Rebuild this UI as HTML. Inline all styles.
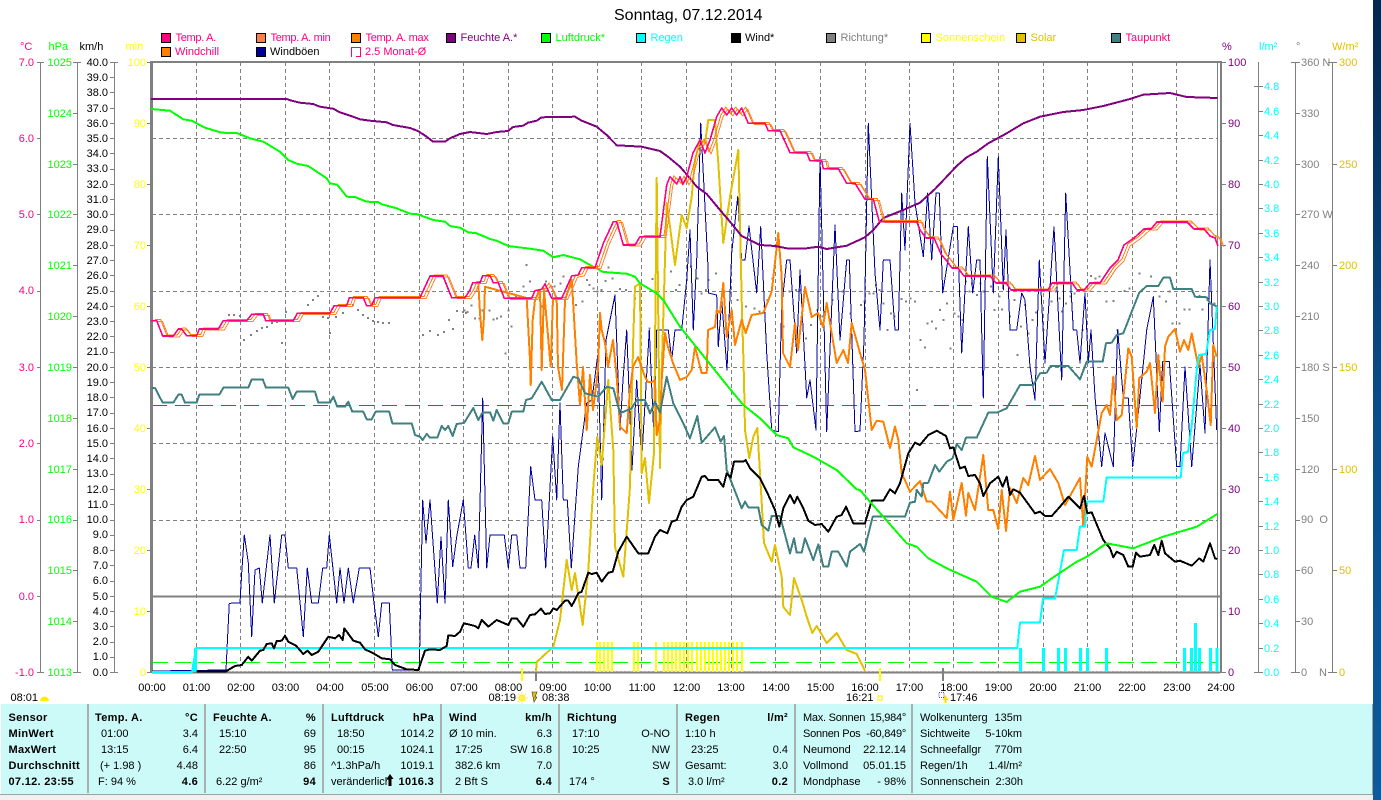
<!DOCTYPE html>
<html><head><meta charset="utf-8"><title>Sonntag, 07.12.2014</title>
<style>
html,body{margin:0;padding:0;background:#fff;width:1381px;height:800px;overflow:hidden}
svg{position:absolute;left:0;top:0;display:block}
text{font-family:"Liberation Sans",sans-serif;font-size:11px}
.s{fill:none;stroke-linejoin:round;shape-rendering:crispEdges}
.b{font-weight:bold;letter-spacing:.3px}
.e{text-anchor:end}
.n{letter-spacing:-.25px}
.p{fill:#ff0080}.g{fill:#00ff00}.y{fill:#ffff00}.c{fill:#00ffff}.v{fill:#800080}.a{fill:#808080}.o{fill:#e0c000}
</style></head><body>
<svg width="1381" height="800" viewBox="0 0 1381 800">
<defs>
<linearGradient id="desk" x1="0" y1="0" x2="0" y2="1"><stop offset="0" stop-color="#04264f"/><stop offset=".5" stop-color="#0a4c88"/><stop offset="1" stop-color="#0d5a9c"/></linearGradient>
<polyline id="temp" class="s" points="151,320.7 156.7,320.7 162.7,336 173.3,336 178.3,329 181.7,329 186.7,335.7 196.7,335.7 199.3,329 218.3,329 223.3,320.7 246.7,320.7 251.7,314.3 263.3,314.3 265.7,320.7 293.3,320.7 297.3,313.3 330,313.3 334,305.7 346.7,305.7 349.3,297.7 363.3,297.7 366.7,305.7 371.7,305.7 375,297.7 420,297.7 430,276 443,276 451.7,297.7 465,297.7 470,290 472.7,282.7 480,282.7 482.7,275.7 490,275.7 493.3,282.7 498.3,282.7 504.3,298.3 531.7,298.3 535,290.7 541.7,289.3 545,284 548.3,290.7 551.7,298.3 561.7,298.3 571.7,276 578.3,275 581.7,267.7 595,267.7 603.3,243.3 613.3,221.7 616.7,221.7 623.3,245 635,245 640,236.7 660,236.7 666.7,185 670,176.7 676.7,184 680,177 683,184 686.7,176.7 693,153 700,140 705,153 710,140 716.7,116.7 721.7,108 726.7,115 731.7,108 736.7,115 741.7,108 748.3,123.3 765,123.3 768.3,130.7 780,130.7 790,152.7 806.7,152.7 810,160.7 821.7,160.7 823.3,168.7 838.3,168.7 846.7,183.3 855,183.3 865,199.3 873.3,199.3 879.3,221.7 916.7,221.7 920,230 926,238 934,238 941,254 946,260 952,268 958,268 964,276 990,276 996,283 1006,283 1011,290 1048,290 1052,283 1072,283 1077,290 1084,290 1090,283 1100,283 1110,268 1118,260 1124,245 1134,238 1144,229 1151,229 1157,222 1187,222 1194,229 1204,229 1210,236 1215,238 1218,246"/>
</defs>

<!-- title -->
<text x="614" y="20" style="font-size:16px">Sonntag, 07.12.2014</text>

<!-- legend -->
<g stroke="#000" stroke-width="1" shape-rendering="crispEdges">
<rect x="161.5" y="33.5" width="9" height="9" fill="#ff0080"/>
<rect x="256.5" y="33.5" width="9" height="9" fill="#ff8040"/>
<rect x="351.5" y="33.5" width="9" height="9" fill="#ff8000"/>
<rect x="446.5" y="33.5" width="9" height="9" fill="#800080"/>
<rect x="541.5" y="33.5" width="9" height="9" fill="#00ff00"/>
<rect x="636.5" y="33.5" width="9" height="9" fill="#00ffff"/>
<rect x="731.5" y="33.5" width="9" height="9" fill="#000"/>
<rect x="826.5" y="33.5" width="9" height="9" fill="#808080"/>
<rect x="921.5" y="33.5" width="9" height="9" fill="#ffff00"/>
<rect x="1016.5" y="33.5" width="9" height="9" fill="#e0c000"/>
<rect x="1111.5" y="33.5" width="9" height="9" fill="#408080"/>
<rect x="161.5" y="47.5" width="9" height="9" fill="#ff8000"/>
<rect x="256.5" y="47.5" width="9" height="9" fill="#000099"/>
</g>
<path d="M351.5 57V47.5H360.5V56.5H356" fill="none" stroke="#ff0080" shape-rendering="crispEdges"/>
<g transform="translate(0,-1)">
<text x="175.5" y="42" class="p" style="letter-spacing:-.3px">Temp. A.</text>
<text x="270.5" y="42" class="p" style="letter-spacing:-.3px">Temp. A. min</text>
<text x="365.5" y="42" class="p" style="letter-spacing:-.3px">Temp. A. max</text>
<text x="460.5" y="42" class="v">Feuchte A.*</text>
<text x="555.5" y="42" class="g">Luftdruck*</text>
<text x="650.5" y="42" class="c">Regen</text>
<text x="745" y="42">Wind*</text>
<text x="840.5" y="42" class="a">Richtung*</text>
<text x="935.5" y="42" class="y">Sonnenschein</text>
<text x="1030.5" y="42" class="o">Solar</text>
<text x="1125.5" y="42" class="p">Taupunkt</text>
<text x="175" y="56" class="p">Windchill</text>
<text x="270" y="56">Windböen</text>
<text x="365" y="56" class="p">2.5 Monat-Ø</text>

<!-- axis headers -->
<text x="20" y="51" class="p">°C</text>
<text x="48.5" y="51" class="g">hPa</text>
<text x="79.5" y="51">km/h</text>
<text x="125.5" y="51" class="y">min</text>
<text x="1222" y="51" class="v">%</text>
<text x="1259" y="51" class="c">l/m²</text>
<text x="1296" y="51" class="a">°</text>
<text x="1332" y="51" class="o">W/m²</text>
</g>

<!-- axis lines and ticks -->
<path stroke="#808080" fill="none" shape-rendering="crispEdges" d="M40.5 62V672M77.5 62V672M114.5 62V672M1258.5 62V672M1295.5 62V672M1332.5 62V672
M37 62.5H44M37 138.5H41M37 214.5H41M37 291.5H41M37 367.5H41M37 443.5H41M37 520.5H41M37 596.5H41M37 672.5H44
M73 62.5H81M73 113.5H78M73 164.5H78M73 214.5H78M73 265.5H78M73 316.5H78M73 367.5H78M73 418.5H78M73 469.5H78M73 520.5H78M73 570.5H78M73 621.5H78M73 672.5H81
M110 62.5H118M110 77.5H115M110 92.5H115M110 108.5H115M110 123.5H115M110 138.5H115M110 153.5H115M110 169.5H115M110 184.5H115M110 199.5H115M110 214.5H115M110 230.5H115M110 245.5H115M110 260.5H115M110 275.5H115M110 291.5H115M110 306.5H115M110 321.5H115M110 336.5H115M110 352.5H115M110 367.5H115M110 382.5H115M110 397.5H115M110 413.5H115M110 428.5H115M110 443.5H115M110 458.5H115M110 474.5H115M110 489.5H115M110 504.5H115M110 520.5H115M110 535.5H115M110 550.5H115M110 565.5H115M110 581.5H115M110 596.5H115M110 611.5H115M110 626.5H115M110 642.5H115M110 657.5H115M110 672.5H118
M147 62.5H151M147 123.5H151M147 184.5H151M147 245.5H151M147 306.5H151M147 367.5H151M147 428.5H151M147 489.5H151M147 550.5H151M147 611.5H151M147 672.5H151
M1221 62.5H1226M1221 123.5H1226M1221 184.5H1226M1221 245.5H1226M1221 306.5H1226M1221 367.5H1226M1221 428.5H1226M1221 489.5H1226M1221 550.5H1226M1221 611.5H1226M1221 672.5H1226
M1254 86.5H1263M1259 111.5H1263M1259 135.5H1263M1259 160.5H1263M1259 184.5H1263M1259 208.5H1263M1259 233.5H1263M1259 257.5H1263M1259 282.5H1263M1259 306.5H1263M1259 330.5H1263M1259 355.5H1263M1259 379.5H1263M1259 404.5H1263M1259 428.5H1263M1259 452.5H1263M1259 477.5H1263M1259 501.5H1263M1259 526.5H1263M1259 550.5H1263M1259 574.5H1263M1259 599.5H1263M1259 623.5H1263M1259 648.5H1263M1254 672.5H1263
M1291 62.5H1300M1296 113.5H1300M1296 164.5H1300M1296 214.5H1300M1296 265.5H1300M1296 316.5H1300M1296 367.5H1300M1296 418.5H1300M1296 469.5H1300M1296 520.5H1300M1296 570.5H1300M1296 621.5H1300M1291 672.5H1300
M1328 62.5H1337M1333 164.5H1337M1333 265.5H1337M1333 367.5H1337M1333 469.5H1337M1333 570.5H1337M1328 672.5H1337"/>

<g transform="translate(0,-1)">
<!-- °C labels -->
<g class="p" text-anchor="end">
<text x="34" y="67">7.0</text><text x="34" y="143">6.0</text><text x="34" y="219">5.0</text><text x="34" y="295">4.0</text><text x="34" y="372">3.0</text><text x="34" y="448">2.0</text><text x="34" y="524">1.0</text><text x="34" y="601">0.0</text><text x="34" y="677">-1.0</text>
</g>
<g class="g" text-anchor="end">
<text x="72" y="67">1025</text><text x="72" y="118">1024</text><text x="72" y="169">1023</text><text x="72" y="219">1022</text><text x="72" y="270">1021</text><text x="72" y="321">1020</text><text x="72" y="372">1019</text><text x="72" y="423">1018</text><text x="72" y="474">1017</text><text x="72" y="524">1016</text><text x="72" y="575">1015</text><text x="72" y="626">1014</text><text x="72" y="677">1013</text>
</g>
<g text-anchor="end">
<text x="108" y="67">40.0</text><text x="108" y="82">39.0</text><text x="108" y="97">38.0</text><text x="108" y="113">37.0</text><text x="108" y="128">36.0</text><text x="108" y="143">35.0</text><text x="108" y="158">34.0</text><text x="108" y="173">33.0</text><text x="108" y="189">32.0</text><text x="108" y="204">31.0</text><text x="108" y="219">30.0</text><text x="108" y="234">29.0</text><text x="108" y="250">28.0</text><text x="108" y="265">27.0</text><text x="108" y="280">26.0</text><text x="108" y="295">25.0</text><text x="108" y="311">24.0</text><text x="108" y="326">23.0</text><text x="108" y="341">22.0</text><text x="108" y="356">21.0</text><text x="108" y="372">20.0</text><text x="108" y="387">19.0</text><text x="108" y="402">18.0</text><text x="108" y="417">17.0</text><text x="108" y="433">16.0</text><text x="108" y="448">15.0</text><text x="108" y="463">14.0</text><text x="108" y="478">13.0</text><text x="108" y="494">12.0</text><text x="108" y="509">11.0</text><text x="108" y="524">10.0</text><text x="108" y="539">9.0</text><text x="108" y="555">8.0</text><text x="108" y="570">7.0</text><text x="108" y="585">6.0</text><text x="108" y="601">5.0</text><text x="108" y="616">4.0</text><text x="108" y="631">3.0</text><text x="108" y="646">2.0</text><text x="108" y="661">1.0</text><text x="108" y="677">0.0</text>
</g>
<g class="y" text-anchor="end">
<text x="146" y="67">100</text><text x="146" y="128">90</text><text x="146" y="189">80</text><text x="146" y="250">70</text><text x="146" y="311">60</text><text x="146" y="372">50</text><text x="146" y="433">40</text><text x="146" y="494">30</text><text x="146" y="555">20</text><text x="146" y="616">10</text><text x="146" y="677">0</text>
</g>
<g class="v">
<text x="1228" y="67">100</text><text x="1228" y="128">90</text><text x="1228" y="189">80</text><text x="1228" y="250">70</text><text x="1228" y="311">60</text><text x="1228" y="372">50</text><text x="1228" y="433">40</text><text x="1228" y="494">30</text><text x="1228" y="555">20</text><text x="1228" y="616">10</text><text x="1228" y="677">0</text>
</g>
<g class="c">
<text x="1264" y="91">4.8</text><text x="1264" y="116">4.6</text><text x="1264" y="140">4.4</text><text x="1264" y="165">4.2</text><text x="1264" y="189">4.0</text><text x="1264" y="213">3.8</text><text x="1264" y="238">3.6</text><text x="1264" y="262">3.4</text><text x="1264" y="287">3.2</text><text x="1264" y="311">3.0</text><text x="1264" y="335">2.8</text><text x="1264" y="360">2.6</text><text x="1264" y="384">2.4</text><text x="1264" y="409">2.2</text><text x="1264" y="433">2.0</text><text x="1264" y="457">1.8</text><text x="1264" y="482">1.6</text><text x="1264" y="506">1.4</text><text x="1264" y="531">1.2</text><text x="1264" y="555">1.0</text><text x="1264" y="579">0.8</text><text x="1264" y="604">0.6</text><text x="1264" y="628">0.4</text><text x="1264" y="653">0.2</text><text x="1264" y="677">0.0</text>
</g>
<g class="a">
<text x="1301" y="67">360 N</text><text x="1301" y="118">330</text><text x="1301" y="169">300</text><text x="1301" y="219">270 W</text><text x="1301" y="270">240</text><text x="1301" y="321">210</text><text x="1301" y="372">180 S</text><text x="1301" y="423">150</text><text x="1301" y="474">120</text><text x="1301" y="524">90&#160;&#160;O</text><text x="1301" y="575">60</text><text x="1301" y="626">30</text><text x="1301" y="677">0</text><text x="1319" y="677">N</text>
</g>
<g class="o">
<text x="1339" y="67">300</text><text x="1339" y="169">250</text><text x="1339" y="270">200</text><text x="1339" y="372">150</text><text x="1339" y="474">100</text><text x="1339" y="575">50</text><text x="1339" y="677">0</text>
</g>
</g>

<!-- grid -->
<path stroke="#808080" stroke-dasharray="4 3" fill="none" shape-rendering="crispEdges" d="M196.5 62V672M240.5 62V672M285.5 62V672M329.5 62V672M374.5 62V672M419.5 62V672M463.5 62V672M508.5 62V672M552.5 62V672M597.5 62V672M641.5 62V672M686.5 62V672M731.5 62V672M775.5 62V672M820.5 62V672M865.5 62V672M909.5 62V672M953.5 62V672M998.5 62V672M1043.5 62V672M1087.5 62V672M1132.5 62V672M1176.5 62V672
M152 138.5H1218M152 214.5H1218M152 291.5H1218M152 367.5H1218M152 443.5H1218M152 520.5H1218"/>
<rect x="152" y="595.5" width="1068" height="2" fill="#808080"/>
<path d="M152 405.5H1218" stroke="#e8107c" stroke-dasharray="15 8" shape-rendering="crispEdges"/>
<path d="M152 662.5H1218" stroke="#00ff00" stroke-dasharray="16 7" shape-rendering="crispEdges"/>
<rect x="150" y="61" width="1071" height="2" fill="#808080"/>
<rect x="150" y="61" width="3" height="612" fill="#808080"/>
<rect x="1217" y="62" width="1" height="610" fill="#808080"/>
<rect x="1220" y="61" width="2" height="612" fill="#808080"/>
<rect x="152" y="671.5" width="1068" height="2" fill="#808080"/>
<path d="M152 671.5H1218" stroke="#e0a040" stroke-dasharray="2 2" shape-rendering="crispEdges"/>

<!-- direction dots -->
<path fill="none" stroke="#808080" stroke-width="2" shape-rendering="crispEdges" d="M228 315h2M233 315h2M239 316h2M243 340h2M250 335h2M256 331h2M261 328h2M266 327h2M271 323h2M276 322h2M281 343h2M285 312h2M307 305h2M312 300h2M317 296h2M322 317h2M327 318h2M329 333h2M335 317h2M342 313h2M352 305h2M357 310h2M362 315h2M367 318h2M372 321h2M377 322h2M382 323h2M388 323h2M422 335h2M429 331h2M437 335h2M443 332h2M452 329h2M448 320h2M456 311h2M462 312h2M465 313h2M916 390h2"/>
<g transform="translate(460,100) scale(.33333)"><path fill="none" stroke="#808080" stroke-width="6" shape-rendering="crispEdges" d="M10 632h6M20 636h6M32 617h6M42 655h6M55 655h6M65 632h6M85 632h6M98 658h6M108 655h6M120 650h6M133 760h6M143 632h6M152 680h6M165 590h6M180 590h6M188 560h6M197 495h6M207 545h6M255 545h6M242 620h6M280 560h6M298 550h6M308 530h6M345 615h6M365 605h6M378 540h6M385 555h6M398 565h6M410 575h6M422 570h6M433 543h6M443 503h6M455 535h6M477 567h6M495 570h6M522 595h6M540 683h6M565 685h6M575 537h6M595 590h6M610 530h6M630 515h6M645 570h6M655 555h6M678 540h6M690 500h6M710 535h6M722 580h6M735 570h6M743 540h6M765 520h6M790 575h6M810 577h6M830 600h6M855 620h6M880 625h6M895 635h6M910 620h6M920 600h6M935 535h6M968 680h6M985 575h6M1005 570h6M1015 570h6M1035 715h6M1050 675h6M1070 630h6M1085 650h6M1115 600h6M1145 575h6M1168 640h6"/></g>
<g transform="translate(860,100) scale(.33333)"><path fill="none" stroke="#808080" stroke-width="6" shape-rendering="crispEdges" d="M0 615h6M10 605h6M25 580h6M37 580h6M45 555h6M55 570h6M68 610h6M80 690h6M90 640h6M100 650h6M122 597h6M135 605h6M148 595h6M162 605h6M178 720h6M192 743h6M200 670h6M213 665h6M225 685h6M237 630h6M247 660h6M258 610h6M268 745h6M280 640h6M292 650h6M305 660h6M315 545h6M325 575h6M333 550h6M348 585h6M358 550h6M368 575h6M390 560h6M400 630h6M415 590h6M423 628h6M447 650h6M460 600h6M470 765h6M480 680h6M492 615h6M503 700h6M515 660h6M525 638h6M548 690h6M572 605h6M585 575h6M595 595h6M603 635h6M615 610h6M628 590h6M640 580h6M665 690h6M690 528h6M703 535h6M715 530h6M737 605h6M757 603h6M770 690h6M790 573h6M805 565h6M835 520h6M870 530h6M895 590h6M915 605h6M925 575h6M935 670h6M955 670h6M970 628h6M985 628h6M1015 588h6M1025 628h6M1040 600h6M1060 610h6"/></g>

<!-- sunshine bars -->
<path stroke="#ffff00" stroke-width="2" fill="none" shape-rendering="crispEdges" d="M597 642V672M600 642V672M604 642V672M608 642V672M612 642V672M634 642V672M638 642V672M656 642V672M664 642V672M668 642V672M672 642V672M676 642V672M680 642V672M684 642V672M688 642V672M692 642V672M697 642V672M701 642V672M705 642V672M709 642V672M713 642V672M717 642V672M721 642V672M725 642V672M729 642V672M733 642V672M737 642V672M742 642V672"/>
<path stroke="#ffff00" stroke-width="2" d="M522 668V681M880 668V681" shape-rendering="crispEdges"/>
<path stroke="#808080" stroke-width="2" d="M536 668V681M943 668V681" shape-rendering="crispEdges"/>

<!-- wind gusts -->
<polyline class="s" stroke="#0000a0" stroke-width="1" points="152,671 226,670 228,629 229.3,603.3 240,603 241.7,573 244.3,535 248.3,563 251.7,636.7 255,570 259.3,568 262.3,603 270,535 274.3,603 281.7,535 285,535 288.3,568 296.7,568 303.3,636.7 307.3,568 311.7,603 318.3,603 322.7,568 326.7,568 329.3,535 336.7,603 340,568 344,603 348.3,568 353.3,603 359.3,568 370,568 374,603 378.3,636.7 381.7,603 389.3,603 392.3,670 419.3,670 421,580 422.7,500 426,543 430,500 437.3,603 441,536.7 445,603 448.3,500 452.7,566.7 456.7,536.7 463.3,500 468.3,568 471,568 474.7,535 478.3,568 482.7,398 486.7,568 490,535 504.3,535 508.3,568 511.7,535 516.7,535 520,568 525.7,568 530.7,466.7 535,500 541.7,500 545.7,568 552.7,436.7 556.7,500 560,403 563.3,500 567.3,500 571.3,568 578.3,466.7 586.7,403 592,400 598,353 601.7,500 606,340 615,295 620,430 623,380 626.7,330 632,470 636.7,380 641.7,460 649.3,330 654,440 656.7,330 668.3,330 671.7,360 675,330 681.7,330 686.7,280 690,230 693.3,330 696.7,260 700.7,123 705,206.7 708,266.7 708.3,293 716.7,295 718.3,346.7 721.7,300 727,370 731.7,253 737.7,196.7 741.7,260 745,260 749,226 756.7,293 760.7,226.7 766.7,353 771.7,430 778.3,431.7 781.7,306.7 786.7,260 790,260 796.7,353 800,270 806.7,398 810,380 816,430 820,156.7 826.7,431.7 835,225 840,340 846.7,260 849.3,260 855,431.7 860,431 864,340 868.3,123.3 875,273 880,330 883.3,260 890,260 895,330 898.3,330 901.7,193 905,250 910,123.3 915,203 923.3,256.7 927.7,193 931.7,260 936,193 939.3,193 942.7,293 953.3,226.7 957.3,226.7 961.7,353 968.3,226.7 972.7,293 976.7,260 980,260 983.3,398 987.3,156.7 993.3,293 998.3,156.7 1003.3,290 1006,230 1010,330 1016.7,330 1021.7,293 1025,300 1030,366.7 1035,400 1039.3,260 1045,363 1054,226.7 1061.7,380 1065.7,193 1073.3,330 1076.7,330 1080,363 1085,293 1088.3,363 1091,330 1095,396.7 1101.7,466.7 1105,433 1113.3,466.7 1117.7,330 1123.3,398 1128.3,398 1132.7,466.7 1140,396.7 1146.7,330 1153.3,296.7 1159.3,431.7 1162.7,361.7 1169.3,361.7 1176.7,466.7 1180,466.7 1185,366.7 1191.7,466.7 1200,365 1205,433 1210,260 1216.7,430"/>

<!-- solar -->
<polyline class="s" stroke="#e0c000" stroke-width="2" points="536,672 536.7,662 553.3,646.7 560,620 566.7,560 571.7,590 575,573 582.7,625 588.3,570 593.3,486.7 597.3,436.7 601.7,465 608.3,380 613.3,450 615,546.7 623.3,576.7 630,486.7 631.7,403 633.3,336.7 635,286.7 640,283.3 641.7,473 645,458 649,503 654,453 656.7,178 659,380 660,468 661.7,370 666.7,203 670,226.7 675,265 681.7,215 686.7,228 691.7,196.7 695,160 700,140 705,143 708.3,120 715,120 718.3,163 723.3,243 730,196.7 738.3,150 741.7,300 744,380 745,430 749.3,458 753.3,436.7 757.3,428 760,473 764,543 771.7,561.7 775,545 781.7,576.7 783.3,607 790,615 794,578 801.7,600 806.7,616.7 812.3,633 816.7,626 826.7,643 836.7,633 846.7,650 856.7,654 865,671"/>

<!-- wind chill -->
<polyline class="s" stroke="#ff8000" stroke-width="2" points="478.3,283 480,313 482.3,340 484,316.7 485,286.7 526.7,298 530,360 530.7,385 532.7,320 535,300 540,290 541.7,370 544,290 550.7,366.7 553,298 556.7,300 558,366.7 562,390 565,300 571.7,280 573,300 576.7,363 580,405 583,367 586.7,430 590,375 593,410 598,370 600,313 601.7,330 605,343 608,367 613,340 616.7,377 620,426.7 626.7,433 630,390 633,367 638,357 645,377 648,382 652,382 655,380 656.7,435 660,420 661.7,380 665,333 668,347 673,363 680,380 686.7,377 691.7,370 695,347 701.7,373 706.7,373 708,330 715,327 716.7,310 720,313 723.3,283 726.7,337 731.7,310 735,345 741.7,320 745.7,333 751.7,315 763.3,313 771.7,291.7 778.3,233 781.7,277 783,353 790,367 795,323 798,350 805,287 811.7,317 818,313 823,327 826.7,303 836.7,363 843.3,350 848,363 851.7,323 860,353 865,370 871.7,430 876.7,420.7 883.3,421.7 890,448 895,426.7 898.3,440 901.7,473 910,491.7 920,481 926.7,501.7 931.7,501.7 946.7,518 950,491.7 953.3,520 961.7,483 966,515.7 968.3,493 975,510 983.3,455 988.3,510 993.3,510 998.3,529 1001.7,490 1006,531 1010,488 1016.7,503 1023.3,478 1028.3,485 1035,456 1040,480 1050,469 1058.3,483 1065,505 1080,478 1083.3,526.7 1087.3,456.7 1091.7,466.7 1101.7,413 1106.7,405 1110,415 1113.3,376.7 1116.7,420 1121.7,415 1128.3,348.3 1131.7,356.7 1136.7,428 1139.3,378 1146.7,371.7 1150,363 1155,413 1158.3,355 1162.7,401.7 1165,346.7 1168.3,336.7 1175,329 1180,351.7 1184,340 1188.3,350 1191.7,333.3 1198.3,366.7 1201.7,355 1206.7,390 1210.7,425 1213.3,345 1216.7,356.7"/>

<!-- dew point -->
<polyline class="s" stroke="#408080" stroke-width="2" points="151.7,387.7 155,388 162.7,402.7 173.3,402.7 178.3,394.7 181.7,394.7 185,402.7 196.7,402.7 199.3,394.7 219.3,394.7 223.3,387.7 248.3,387.7 251.7,379.3 262.7,379.3 266,387.7 288.3,387.7 292.7,399 296.7,391.7 315,391.7 318.3,402.7 330,402.7 333.3,396.7 337.3,406.7 345,406.7 348.3,401.7 352.3,411.7 363.3,411.7 366.7,419.3 371.7,419.3 375.7,411.7 389.3,411.7 392.3,423.3 411.7,423.3 415,435 420,436.7 422.7,440 426.7,434 430,437.7 437.3,437.7 441.7,426 445,430 448.3,426 452.7,436 456.7,424 464,423 473.3,408 478.3,420 482.7,412.3 490,412.3 493.3,420.7 496.7,410 503.3,423.3 508.3,423.3 511.7,411.7 523.3,411.7 526,400 531.7,398.3 541.7,381.7 551.7,400 560,400 573.3,376.7 578.3,378.3 585,393.3 598.3,396.7 606.7,386.7 613.3,388.3 620,413.3 631.7,408.3 636.7,400 645,400 650,413.3 655,401.7 660,412.7 666.7,376.7 673.3,403.3 683.3,423.3 690,438.3 697.3,416 701.7,442.7 715,427.3 720.7,441.7 724,436 726.7,470 741.7,508.3 745,501.7 748.3,507.3 758.3,507.3 761.7,525 768.3,530.7 771.7,516 780,516 790,553.3 794,538.3 796.7,552.7 801.7,552.7 805,538.3 813.3,560 818.3,544.3 823.3,566.7 828.3,566.7 831.7,551.7 838.3,551.7 846.7,566.7 850,551.7 860,544 864,551.7 872.7,516.7 905,516.7 910,502.7 915,501.7 916.7,490 921.7,496.7 923.3,483.3 928.3,482.7 935,465 939.3,471.7 946.7,461.7 952.7,458.3 956.7,444 961.7,450 966,437.7 976.7,437.7 988.3,412.7 996.7,412.7 1006.7,408.3 1020,385 1033.3,385 1040,373.3 1046.7,372.7 1050.7,366 1068.3,366 1080,379.3 1086.7,361.7 1102.7,361.7 1106,343.3 1111.7,342.7 1116.7,335 1123.3,333.3 1131.7,311.7 1139.3,292.7 1146.7,286 1158.3,286 1163.3,277.7 1170,277.7 1173.3,289 1191.7,289 1195,296.7 1206.7,297.3 1210,303.3 1217.3,306.7"/>

<!-- rain -->
<path stroke="#00ffff" stroke-width="3" fill="none" shape-rendering="crispEdges" d="M193.5 672V664M195.5 672V648M1020.5 672V648M1043.5 672V648M1058.5 672V648M1065.5 672V648M1080.5 672V648M1087.5 672V648M1106.5 672V648M1184.5 672V648M1191.5 672V648M1195.5 672V623M1199.5 672V648M1210.5 672V648M1217 672V648"/>
<polyline class="s" stroke="#00ffff" stroke-width="2" points="152,672 192,672 196,648 1017.3,648 1020,622.7 1040,622.7 1043,598.7 1055,598.7 1064,550 1076.7,550 1080,526.7 1085,526.7 1086.7,501.7 1103.3,501.7 1106.7,477.3 1180.7,477.3 1183,453 1188,452 1192,423 1197,367 1199,355 1206,354 1210,330 1215,329 1216.7,306.7"/>

<!-- avg wind -->
<polyline class="s" stroke="#000" stroke-width="2" points="196.7,671.3 226,671.3 235,666 241.7,665 248.3,656.7 251.7,660.7 260,650.7 263.3,650 266.7,644 271.7,643.3 274,648.3 276.7,641 281.7,640.7 285,635.7 288.3,641.7 296,645.7 303.3,654 307.3,650.7 311.7,655 318.3,651.7 328.3,636.7 335,638.3 339,635 342.7,640 344.3,628.3 353.3,640.7 360,642.7 365,649.3 373.3,653.3 381.7,658.3 390,659.3 395,665 406.7,669.3 418.3,670 425,650.7 430,649.3 440,650 446.7,646 448.3,635.3 455,636 460,631.7 464,623.3 475,626 478.3,628.3 481.7,620 488.3,626.7 496.7,620 508.3,625 511.7,618.3 516.7,618.3 523.3,626.7 530,615 535,614.3 541,608.7 545,614 550,613.3 553.3,608.3 556.7,610 565,600.7 568.3,600.7 571.7,606 578.3,593.3 581.7,591.7 588.3,572.7 591.7,574 596.7,572.7 601.7,581.7 608.3,572.7 612.7,571.7 618.3,551.7 626.7,536.7 638.3,553.3 648.3,553.3 655,536.7 660,530 667.3,533.3 671.7,521.7 676.7,520 681.7,506.7 686.7,500 693.3,496.7 701.7,476.7 705,476 708.3,480 718.3,480 723.3,486.7 726.7,473.3 730.7,477.3 734,461.7 743.3,461.7 745.7,460 750,468.3 760,478.3 768.3,495 775,510 779.3,526.7 783.3,508.3 790,495 794.3,503.3 797.3,496.7 803.3,508.3 808.3,520.7 815,525 821.7,524 828.3,531.7 836.7,516.7 841.7,515 846,506.7 853.3,523.3 865,523.3 871.7,500.7 883.3,500.7 890,489.3 895,493.3 900,483.3 908.3,453.3 915,442.7 920,445 928.3,435 936.7,430.7 946,436 950,448.3 953.3,447.3 960,468.3 965,466.7 968.3,476 975,475 980,483.3 983.3,496 990,483.3 998.3,476.7 1002.7,486.7 1006.7,476.7 1010,495 1013.3,489.3 1020,492.7 1035,513.3 1040,511.7 1045,516 1051.7,516 1060,506.7 1068.3,496.7 1080,508.3 1084,496 1087.3,513.3 1091.7,512.3 1103.3,540 1110,548.3 1113.3,557.3 1116.7,551.7 1123.3,555 1128.3,566.7 1132.7,566.7 1136,552.7 1140,556.7 1150,555 1154.3,545 1158.3,555 1161.7,540.7 1165,553.3 1175,561.7 1180,560.7 1191.7,565.7 1199.3,558.3 1203.3,561.7 1210,543.3 1215,558.3 1217.3,559"/>

<!-- pressure -->
<polyline class="s" stroke="#00ff00" stroke-width="2" points="151,109 170,110.7 183.3,119.3 191.7,120.7 205,127.7 221.7,132.7 236.7,133 250,138.3 263.3,141.7 280,151.7 288.3,160 296.7,163.7 308.3,166 326.7,178.3 330,183.3 337.3,184.7 346.7,196.7 355,197 366.7,201.7 378.3,202 381.7,204.3 396.7,208.3 410,213.7 416.7,214 433.3,220 445,221.7 450,226 460,227.7 468.3,232.3 476.7,233.3 490,239 496.7,240.7 508.3,246 530,248.7 543.3,250.7 553.3,257.3 563.3,255 580,259.3 590,265 603.3,272 626.7,273.7 635,276.7 640,283.3 656.7,293.3 663.3,300 680,326.7 693.3,343.3 706.7,360 726.7,385 743.3,405 760,418.3 776.7,435 788.3,438.3 793.3,447.3 813.3,456.7 836.7,470 856.7,489.3 860,490 870,501.7 906.7,543.3 916.7,546.7 928.3,558.3 946.7,568.3 976.7,581.7 991.7,596.7 1006.7,602 1020,591.7 1040,586.7 1053.3,577.3 1076.7,561.7 1086.7,556.7 1106.7,543.3 1133.3,548.3 1163.3,536.7 1196.7,526.7 1217.3,514"/>

<!-- humidity -->
<polyline class="s" stroke="#800080" stroke-width="2" points="151,99 286.7,99 291.7,100.7 300,102.7 313,104 320,106.7 333,108.7 340,112.3 353,116.7 360,119.3 370,120.7 386.7,122.3 393,125 410,128 418,131 426.7,136.7 433,141.7 445,141.7 450,138.3 460,134 470,132 486.7,134 496.7,132 508,131 513,127 523,125.7 528,122.7 536.7,120.7 541.7,117.3 575,116.7 581.7,120.7 596.7,126.7 606.7,135 616.7,145.3 641.7,146.7 660,151 668,156.7 680,166.7 690,178.3 696.7,186.7 706.7,194 720,210 730,221.7 741.7,236 760,245 775,246 786.7,248.3 806.7,248.3 818.3,246.7 826.7,249 846.7,245.7 865,237.3 873.3,230 883.3,218 903.3,210 920,202.7 935,189 946.7,176.7 956.7,166 966.7,157.3 976.7,151.7 988.3,143.3 1006.7,133.3 1023.3,123.3 1040,116.7 1063.3,112 1083.3,110 1103.3,106 1130,99 1143.3,94.7 1170,93 1186.7,97 1217.7,98"/>

<!-- temperature -->
<use href="#temp" stroke="#ff8040" stroke-width="1" transform="translate(6,1)"/>
<use href="#temp" stroke="#ff8000" stroke-width="1" transform="translate(4,-1)"/>
<use href="#temp" stroke="#ff0080" stroke-width="1.6"/>

<!-- x labels -->
<g text-anchor="middle">
<text x="152" y="691">00:00</text><text x="196.5" y="691">01:00</text><text x="241" y="691">02:00</text><text x="285.5" y="691">03:00</text><text x="330" y="691">04:00</text><text x="375" y="691">05:00</text><text x="419.5" y="691">06:00</text><text x="464" y="691">07:00</text><text x="508.5" y="691">08:00</text><text x="553" y="691">09:00</text><text x="597.5" y="691">10:00</text><text x="642" y="691">11:00</text><text x="686.5" y="691">12:00</text><text x="731" y="691">13:00</text><text x="776" y="691">14:00</text><text x="820.5" y="691">15:00</text><text x="865" y="691">16:00</text><text x="909.5" y="691">17:00</text><text x="954" y="691">18:00</text><text x="998.5" y="691">19:00</text><text x="1043" y="691">20:00</text><text x="1087.5" y="691">21:00</text><text x="1132" y="691">22:00</text><text x="1177" y="691">23:00</text><text x="1221" y="691">24:00</text>
</g>
<text x="10.5" y="701">08:01</text>
<path d="M40 701a4.5 4.5 0 0 1 9 0z" fill="#ffee00"/>
<text x="488.5" y="701">08:19</text>
<circle cx="522" cy="698" r="3.5" fill="#ffee00"/>
<path d="M522 692v12M516 698h12M518 694l8 8M526 694l-8 8" stroke="#ffee66" stroke-width="1"/>
<path d="M532 692h5l-2 5h2l-3 5-1-5z" fill="#e0c000" stroke="#333" stroke-width=".6"/>
<text x="542" y="701">08:38</text>
<text x="846" y="701">16:21</text>
<rect x="878" y="696" width="4" height="4" fill="none" stroke="#ffee44" stroke-width="1.4"/>
<rect x="939" y="692.5" width="5" height="5" fill="none" stroke="#5050c0" stroke-dasharray="1 1"/>
<path d="M945.5 695l3 5h-2v3h-2v-3h-2z" fill="#ffdd00"/>
<text x="950" y="701">17:46</text>

<!-- right desktop strip -->
<rect x="1373" y="0" width="8" height="800" fill="url(#desk)"/>

<!-- bottom panel -->
<rect x="1" y="704" width="1371" height="90" fill="#ccfaf8"/>
<rect x="1372" y="704" width="1" height="90" fill="#a0a0a0"/>
<rect x="0" y="794" width="1373" height="1" fill="#a0a0a0"/>
<rect x="0" y="795" width="1373" height="5" fill="#f0f0f0"/>
<path d="M88 704V793M205 704V793M323 704V793M441 704V793M559 704V793M677 704V793M795 704V793M912 704V793" stroke="#a8b0b0" stroke-width="1.6" shape-rendering="crispEdges"/>

<g transform="translate(0,-1)">
<text x="8.5" y="722" class="b">Sensor</text>
<text x="8.5" y="738" class="b">MinWert</text>
<text x="8.5" y="754" class="b">MaxWert</text>
<text x="8.5" y="770" class="b">Durchschnitt</text>
<text x="8.5" y="786" class="b">07.12. 23:55</text>

<text x="95" y="722" class="b">Temp. A.</text><text x="198" y="722" class="b e">°C</text>
<text x="101" y="738">01:00</text><text x="198" y="738" class="e">3.4</text>
<text x="101" y="754">13:15</text><text x="198" y="754" class="e">6.4</text>
<text x="100" y="770">(+ 1.98 )</text><text x="198" y="770" class="e">4.48</text>
<text x="98" y="786">F: 94 %</text><text x="198" y="786" class="b e">4.6</text>

<text x="213" y="722" class="b">Feuchte A.</text><text x="316" y="722" class="b e">%</text>
<text x="219" y="738">15:10</text><text x="316" y="738" class="e">69</text>
<text x="219" y="754">22:50</text><text x="316" y="754" class="e">95</text>
<text x="316" y="770" class="e">86</text>
<text x="216" y="786">6.22 g/m²</text><text x="316" y="786" class="b e">94</text>

<text x="331" y="722" class="b">Luftdruck</text><text x="434" y="722" class="b e">hPa</text>
<text x="337" y="738">18:50</text><text x="434" y="738" class="e">1014.2</text>
<text x="337" y="754">00:15</text><text x="434" y="754" class="e">1024.1</text>
<text x="331" y="770">^1.3hPa/h</text><text x="434" y="770" class="e">1019.1</text>
<text x="331" y="786">veränderlich</text><path d="M390 775l3.5 5h-2v7h-3v-7h-2z" fill="#000"/><text x="434" y="786" class="b e">1016.3</text>

<text x="449" y="722" class="b">Wind</text><text x="552" y="722" class="b e">km/h</text>
<text x="449" y="738">Ø 10 min.</text><text x="552" y="738" class="e">6.3</text>
<text x="455" y="754">17:25</text><text x="552" y="754" class="e">SW 16.8</text>
<text x="455" y="770">382.6 km</text><text x="552" y="770" class="e">7.0</text>
<text x="455" y="786">2 Bft S</text><text x="552" y="786" class="b e">6.4</text>

<text x="567" y="722" class="b">Richtung</text>
<text x="572" y="738">17:10</text><text x="670" y="738" class="e">O-NO</text>
<text x="572" y="754">10:25</text><text x="670" y="754" class="e">NW</text>
<text x="670" y="770" class="e">SW</text>
<text x="569" y="786">174 °</text><text x="670" y="786" class="b e">S</text>

<text x="685" y="722" class="b">Regen</text><text x="788" y="722" class="b e">l/m²</text>
<text x="685" y="738">1:10 h</text>
<text x="691" y="754">23:25</text><text x="788" y="754" class="e">0.4</text>
<text x="685" y="770">Gesamt:</text><text x="788" y="770" class="e">3.0</text>
<text x="688" y="786">3.0 l/m²</text><text x="788" y="786" class="b e">0.2</text>

<text x="803" y="722" class="n">Max. Sonnen</text><text x="906" y="722" class="e n">15,984°</text>
<text x="803" y="738" class="n">Sonnen Pos</text><text x="906" y="738" class="e n">-60,849°</text>
<text x="803" y="754">Neumond</text><text x="906" y="754" class="e">22.12.14</text>
<text x="803" y="770">Vollmond</text><text x="906" y="770" class="e">05.01.15</text>
<text x="803" y="786">Mondphase</text><text x="906" y="786" class="e">- 98%</text>

<text x="920" y="722">Wolkenunterg</text><text x="1022" y="722" class="e">135m</text>
<text x="920" y="738">Sichtweite</text><text x="1022" y="738" class="e">5-10km</text>
<text x="920" y="754">Schneefallgr</text><text x="1022" y="754" class="e">770m</text>
<text x="920" y="770">Regen/1h</text><text x="1022" y="770" class="e">1.4l/m²</text>
<text x="920" y="786">Sonnenschein</text><text x="1023" y="786" class="e">2:30h</text>
</g>
</svg>
</body></html>
